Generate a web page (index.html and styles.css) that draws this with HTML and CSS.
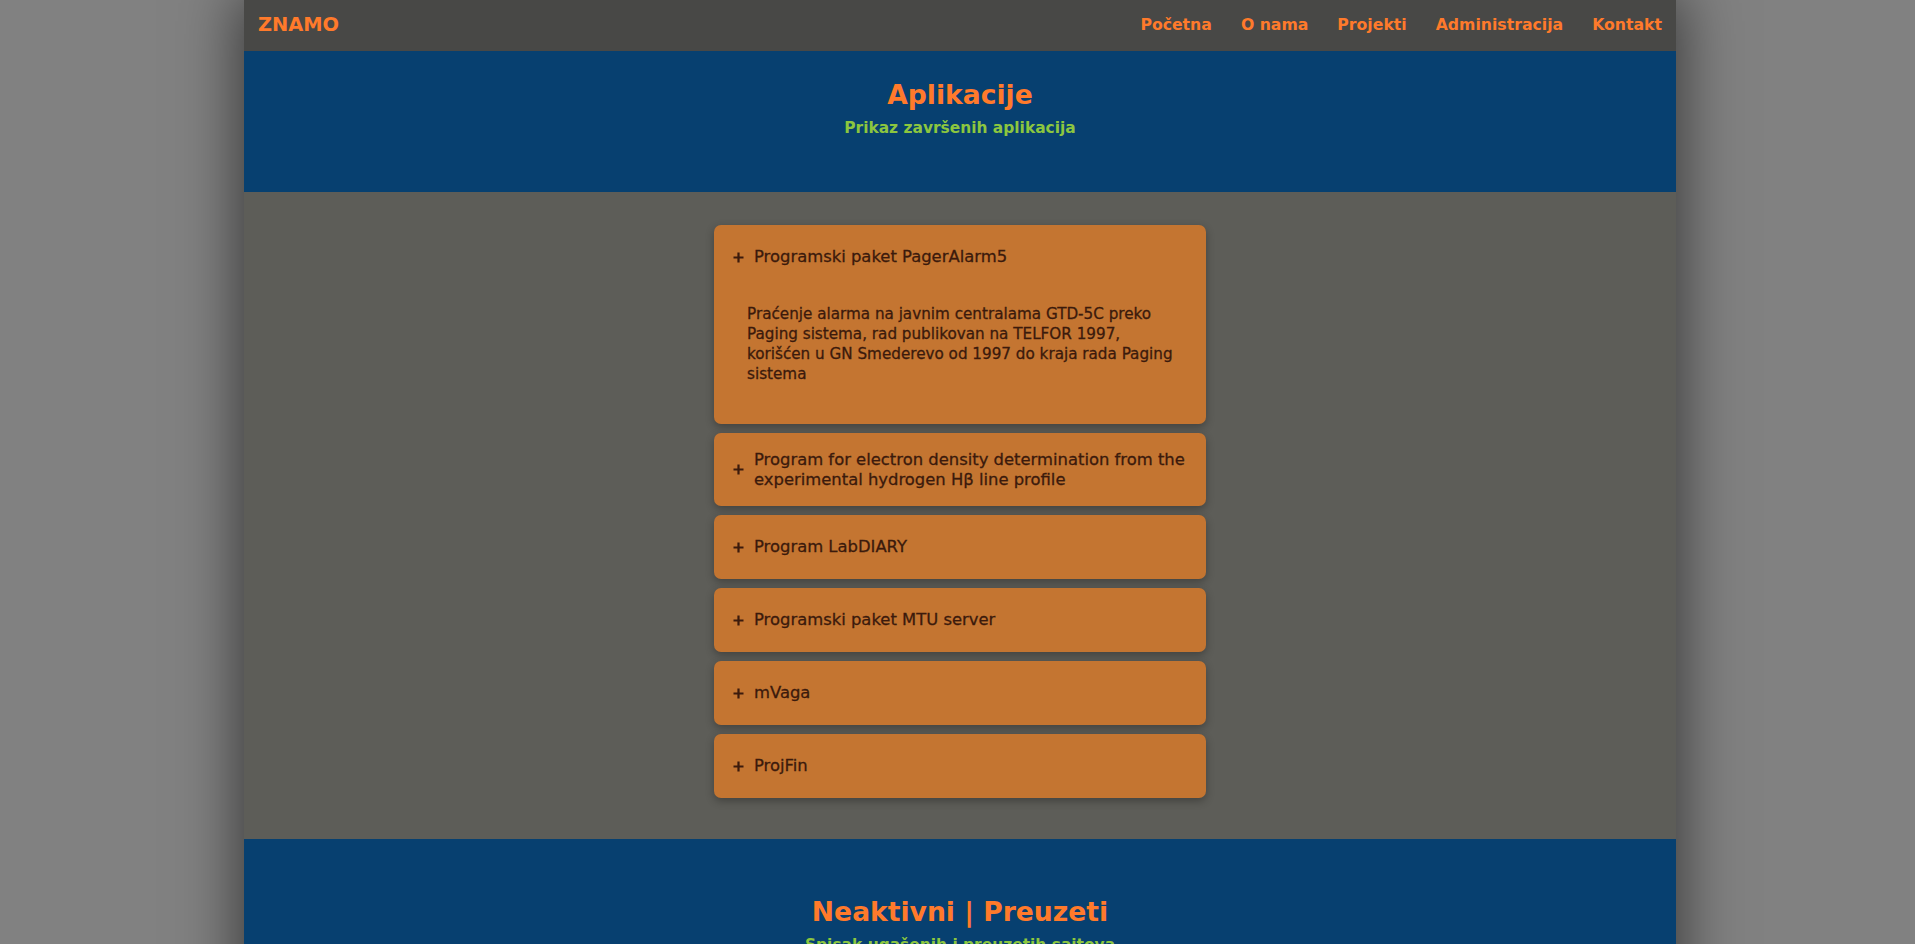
FILE: index.html
```html
<!DOCTYPE html>
<html lang="sr">
<head>
<meta charset="utf-8">
<title>ZNAMO - Aplikacije</title>
<link rel="stylesheet" href="styles.css">
</head>
<body>
<div class="page">
  <header class="nav">
    <a class="brand" href="#">ZNAMO</a>
    <nav class="menu">
      <a href="#">Početna</a>
      <a href="#">O nama</a>
      <a href="#">Projekti</a>
      <a href="#">Administracija</a>
      <a href="#">Kontakt</a>
    </nav>
  </header>

  <section class="hero">
    <h1 class="hero-title">Aplikacije</h1>
    <p class="hero-sub">Prikaz završenih aplikacija</p>
  </section>

  <main class="content">
    <div class="accordion">
      <div class="card open">
        <div class="card-head">
          <svg class="plus" viewBox="0 0 11 11" aria-hidden="true"><path d="M5.5 0.5v10M0.5 5.5h10"/></svg>
          <span>Programski paket PagerAlarm5</span>
        </div>
        <div class="card-body">Praćenje alarma na javnim centralama GTD-5C preko Paging sistema, rad publikovan na TELFOR 1997, korišćen u GN Smederevo od 1997 do kraja rada Paging sistema</div>
      </div>
      <div class="card">
        <div class="card-head">
          <svg class="plus" viewBox="0 0 11 11" aria-hidden="true"><path d="M5.5 0.5v10M0.5 5.5h10"/></svg>
          <span>Program for electron density determination from the experimental hydrogen Hβ line profile</span>
        </div>
      </div>
      <div class="card">
        <div class="card-head">
          <svg class="plus" viewBox="0 0 11 11" aria-hidden="true"><path d="M5.5 0.5v10M0.5 5.5h10"/></svg>
          <span>Program LabDIARY</span>
        </div>
      </div>
      <div class="card">
        <div class="card-head">
          <svg class="plus" viewBox="0 0 11 11" aria-hidden="true"><path d="M5.5 0.5v10M0.5 5.5h10"/></svg>
          <span>Programski paket MTU server</span>
        </div>
      </div>
      <div class="card">
        <div class="card-head">
          <svg class="plus" viewBox="0 0 11 11" aria-hidden="true"><path d="M5.5 0.5v10M0.5 5.5h10"/></svg>
          <span>mVaga</span>
        </div>
      </div>
      <div class="card">
        <div class="card-head">
          <svg class="plus" viewBox="0 0 11 11" aria-hidden="true"><path d="M5.5 0.5v10M0.5 5.5h10"/></svg>
          <span>ProjFin</span>
        </div>
      </div>
    </div>
  </main>

  <section class="hero hero-second">
    <h2 class="hero-title">Neaktivni | Preuzeti</h2>
    <p class="hero-sub">Spisak ugašenih i preuzetih sajtova</p>
  </section>
</div>
</body>
</html>
```
FILE: styles.css
```css
* { box-sizing: border-box; }

html, body {
  margin: 0;
  background: #818181;
}

body {
  padding-left: 5px;
  font-family: "DejaVu Sans", "Noto Sans", sans-serif;
}

.page {
  width: 1432px;
  margin: 0 auto;
  background: #5d5d58;
  box-shadow: 0 0 55px 6px rgba(0, 0, 0, 0.55);
}

/* top navigation */
.nav {
  height: 51px;
  padding: 0 14px 3px;
  background: #484846;
  display: flex;
  align-items: center;
  justify-content: space-between;
}

.brand {
  color: #ff7a2b;
  font-weight: 700;
  font-size: 19.4px;
  text-decoration: none;
}

.menu {
  display: flex;
  gap: 29px;
}

.menu a {
  color: #ff7a2b;
  font-weight: 700;
  font-size: 15.7px;
  text-decoration: none;
}

/* blue hero band */
.hero {
  background: #074070;
  text-align: center;
  padding: 27px 0 54px;
}

.hero-title {
  margin: 0;
  color: #ff7a2b;
  font-size: 26.6px;
  line-height: 33px;
  font-weight: 700;
}

.hero-sub {
  margin: 7px 0 0;
  color: #8cc63f;
  font-size: 15.45px;
  line-height: 20px;
  font-weight: 700;
}

.hero-second {
  padding-top: 56px;
  padding-bottom: 80px;
}

/* accordion list */
.content {
  padding: 33px 0 41px;
}

.accordion {
  width: 492px;
  margin: 0 auto;
  display: flex;
  flex-direction: column;
  gap: 9px;
}

.card {
  background: #c47531;
  border-radius: 7px;
  box-shadow: 0 3px 8px rgba(0, 0, 0, 0.3);
  color: #3b1a0c;
  -webkit-text-stroke: 0.3px #3b1a0c;
}

.card-head {
  min-height: 64px;
  padding: 17px 14px 17px 19px;
  display: flex;
  align-items: center;
  gap: 10px;
  font-size: 16.4px;
  line-height: 19.5px;
}

.plus {
  flex: 0 0 11px;
  width: 11px;
  height: 11px;
  stroke: #3b1a0c;
  stroke-width: 2.2;
  fill: none;
}

.card-body {
  padding: 15px 30px 40px 33px;
  font-size: 15.2px;
  line-height: 20px;
}
```
